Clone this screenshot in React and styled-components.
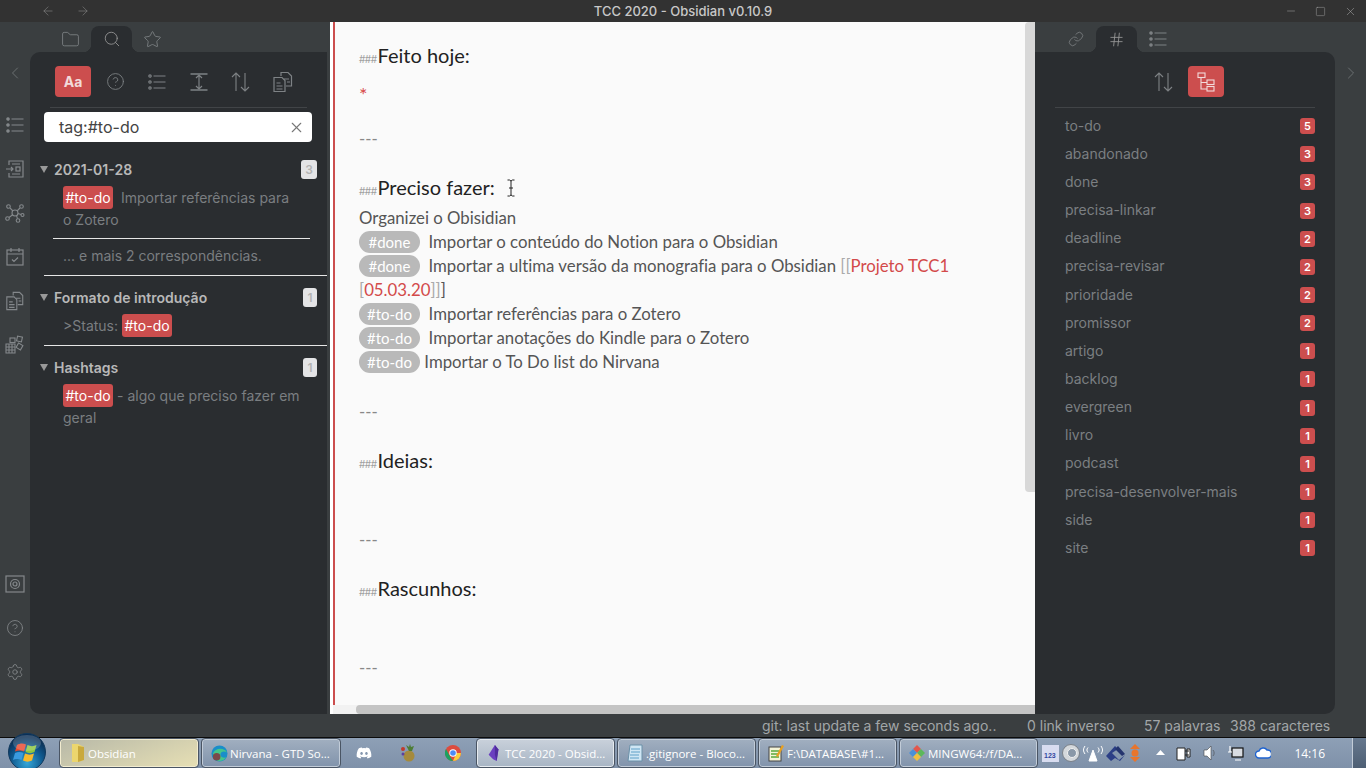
import React from 'react';
import styled, { createGlobalStyle } from 'styled-components';
import { ArrowLeft, ArrowRight, ChevronLeft, ChevronRight, CircleHelp, Folder, Hash, Link, Minus, Search, Settings, Square, Star, X } from 'lucide-react';
import { FaDiscord } from 'react-icons/fa';

const Global = createGlobalStyle`
	html, body { margin: 0; padding: 0; height: 100%; overflow: hidden; }
	body { background: #3a3e40; font-family: Inter, 'Liberation Sans', sans-serif; }
	* { box-sizing: border-box; }
`;

const Sort = () => (
	<svg width='22' height='22' viewBox='0 0 22 22' fill='none' stroke='currentColor' strokeWidth='1.1'>
		<path d='M6 20V2M2 6l4-4 4 4M15 2v18M11 16l4 4 4-4' />
	</svg>
);

const Collapse = () => (
	<svg width='20' height='20' viewBox='0 0 20 20' fill='none' stroke='currentColor' strokeWidth='1.2'>
		<path d='M1.5 2h17M1.5 18h17' strokeWidth='1.6' />
		<path d='M10 3v14M7 6l3-3 3 3M7 14l3 3 3-3' />
	</svg>
);

const Lines = ({ filled }) => (
	<svg width='18' height='18' viewBox='0 0 18 18' fill='none' stroke='currentColor' strokeWidth='1.2'>
		<circle cx='2' cy='3' r='1.2' fill={filled ? 'currentColor' : 'none'} />
		<circle cx='2' cy='9' r='1.2' fill={filled ? 'currentColor' : 'none'} />
		<circle cx='2' cy='15' r='1.2' fill={filled ? 'currentColor' : 'none'} />
		<path d='M5.500 3h12M5.500 9h12M5.500 15h12' />
	</svg>
);

const Docs = () => (
	<svg width='22' height='22' viewBox='0 0 22 22' fill='none' stroke='currentColor' strokeWidth='1.2'>
		<path d='M9 5V1.5h7l3.5 3.5v10H14' />
		<path d='M2 6.5h8l3 3v11H2z' />
		<path d='M4.5 12h4M4.5 15h6M4.5 18h6M12 8h5M15 11h3' />
	</svg>
);

const Tree = () => (
	<svg width='18' height='20' viewBox='0 0 18 20' fill='none' stroke='currentColor' strokeWidth='1.1'>
		<rect x='1' y='1' width='7' height='4.5' />
		<rect x='10' y='8' width='7' height='4.5' />
		<rect x='10' y='14.5' width='7' height='4.5' />
		<path d='M4 5.500V17h6M4 10.500h6' />
	</svg>
);

const Backlinks = () => (
	<svg width='20' height='20' viewBox='0 0 20 20' fill='none' stroke='currentColor' strokeWidth='1.2'>
		<path d='M4 6V2h14v16H4v-4' />
		<path d='M1 10h7M6 8l2 2-2 2' />
		<rect x='11' y='8' width='4' height='4' />
		<path d='M7 5h8M7 15h8' />
	</svg>
);

const Graph = () => (
	<svg width='20' height='20' viewBox='0 0 20 20' fill='none' stroke='currentColor' strokeWidth='1.1'>
		<circle cx='10' cy='10' r='3' />
		<circle cx='3.500' cy='3.500' r='1.800' />
		<circle cx='16.500' cy='3.500' r='1.800' />
		<circle cx='2.500' cy='15.500' r='1.800' />
		<circle cx='13' cy='17.500' r='1.800' />
		<circle cx='17.500' cy='12' r='1.500' />
		<path d='M5 5l3 3M15 5l-3 3M4 14.500l4-3M11.500 12.600l1 3M13 10.500l3 1' />
	</svg>
);

const Calendar = () => (
	<svg width='20' height='20' viewBox='0 0 20 20' fill='none' stroke='currentColor' strokeWidth='1.2'>
		<rect x='2' y='3' width='16' height='15' />
		<path d='M2 7h16M6 1v4M14 1v4M7 12.500l2 2 4-4' />
	</svg>
);

const Blocks = () => (
	<svg width='20' height='20' viewBox='0 0 20 20' fill='none' stroke='currentColor' strokeWidth='1.1'>
		<path d='M1 9h9v9H1zM1 12h9M1 15h9M4 9v9M7 9v9' />
		<rect x='12' y='1.500' width='5' height='5' transform='rotate(12 14.500 4)' />
		<rect x='12' y='9' width='5' height='5' transform='rotate(30 14.500 11.500)' />
		<rect x='5' y='3' width='5' height='4.500' />
	</svg>
);

const Camera = () => (
	<svg width='20' height='18' viewBox='0 0 20 18' fill='none' stroke='currentColor' strokeWidth='1.2'>
		<rect x='1' y='1' width='18' height='16' />
		<circle cx='10' cy='9' r='4.500' />
		<circle cx='10' cy='9' r='2' />
	</svg>
);

const Cursor = () => (
	<svg width='10' height='18' viewBox='0 0 10 18' fill='none' stroke='#222' strokeWidth='1'>
		<path d='M1.500 1h2L5 2l1.500-1h2M5 2v14M1.500 17h2L5 16l1.500 1h2M3 9h4' />
	</svg>
);

const Orb = () => (
	<svg width='38' height='38' viewBox='0 0 38 38'>
		<defs>
			<radialGradient id='orbFill' cx='50%' cy='80%' r='70%'>
				<stop offset='0%' stopColor='#35a6d8' />
				<stop offset='60%' stopColor='#0f5a90' />
				<stop offset='100%' stopColor='#0b2f55' />
			</radialGradient>
		</defs>
		<circle cx='19' cy='19' r='18.500' fill='url(#orbFill)' stroke='#123a5e' />
		<path d='M9 12c3-2 6-2 9-.500l-2 7c-3-1.500-6-1.500-9 0z' fill='#e8492f' />
		<path d='M19.500 12c3 1.500 6 1.500 9 0l-2 7c-3 1.500-6 1.500-9 0z' fill='#8cc63f' />
		<path d='M7 20c3-1.500 5.500-1.500 8.500 0l-2 7c-3-1.500-6-1.500-8.500 0z' fill='#3a9be0' />
		<path d='M17 20.500c3 1.500 6 1.500 9 0l-2 7c-3 1.500-6 1.500-9 0z' fill='#f8b92c' />
		<ellipse cx='19' cy='10' rx='14' ry='8' fill='#fff' opacity='0.18' />
	</svg>
);

const FolderIco = () => (
	<svg width='14' height='20' viewBox='0 0 14 20'>
		<path d='M1 1h6l6 3v13l-6 2H1z' fill='#ecd66e' />
		<path d='M7 3l6 1v13l-6 2z' fill='#c9a93c' />
	</svg>
);

const Edge = () => (
	<svg width='17' height='17' viewBox='0 0 18 18'>
		<circle cx='9' cy='9' r='8.500' fill='#1a8ec9' />
		<path d='M2 9c2-6 12-7 15-1-3-2-7-1-7 2 0 3 4 4 6 3-3 5-9 5-11 2z' fill='#45c58a' />
		<circle cx='6' cy='12.500' r='4' fill='#7a4a4a' />
	</svg>
);

const Pineapple = () => (
	<svg width='16' height='18' viewBox='0 0 16 18'>
		<ellipse cx='9' cy='12' rx='5.500' ry='5.500' fill='#a58a3c' />
		<path d='M9 7L6 1l3 2 1-3 1 3 3-1-2 5z' fill='#4d7d35' />
		<circle cx='3' cy='5' r='2' fill='#c1392b' />
		<circle cx='3' cy='10' r='1.500' fill='#5b3fa0' />
	</svg>
);

const Chrome = () => (
	<svg width='16' height='16' viewBox='0 0 16 16'>
		<circle cx='8' cy='8' r='8' fill='#dd4b3e' />
		<path d='M1 4l4 7.500 3 4.500A8 8 0 0 1 1 4z' fill='#1ca261' />
		<path d='M8 16l3.500-8H16a8 8 0 0 1-8 8z' fill='#fbcd3c' />
		<circle cx='8' cy='8' r='3.700' fill='#fff' />
		<circle cx='8' cy='8' r='2.800' fill='#4c8bf5' />
	</svg>
);

const Gem = () => (
	<svg width='12' height='16' viewBox='0 0 12 18'>
		<path d='M7 0l4 5-2 13-4-2-5-5z' fill='#6a3fc0' />
		<path d='M7 0l4 5-2 13-2-7z' fill='#4f2c9c' />
	</svg>
);

const Notepad = () => (
	<svg width='16' height='18' viewBox='0 0 16 18'>
		<path d='M3 1h12v16H1z' fill='#cfe6f4' stroke='#6a90a8' />
		<path d='M4 5h9M4 8h9M3 11h9M3 14h9' stroke='#5fa0c8' />
	</svg>
);

const NotepadPlus = () => (
	<svg width='16' height='18' viewBox='0 0 16 18'>
		<rect x='1' y='3' width='12' height='14' fill='#f4f4d8' stroke='#444' />
		<path d='M3 7h8M3 10h8M3 13h8' stroke='#5aa83c' strokeWidth='1.500' />
		<path d='M8 12l6-11 2 1-6 11z' fill='#e8a020' />
	</svg>
);

const GitIco = () => (
	<svg width='18' height='18' viewBox='0 0 18 18'>
		<path d='M9 1l4 4-4 4-4-4z' fill='#e2574c' />
		<path d='M5 5l4 4-4 4-4-4z' fill='#4a90d9' />
		<path d='M13 5l4 4-4 4-4-4z' fill='#5cb85c' />
		<path d='M9 9l4 4-4 4-4-4z' fill='#f0c040' />
	</svg>
);

const Tray = {
	Num: () => (
		<svg width='17' height='17' viewBox='0 0 17 17'>
			<rect width='17' height='17' fill='#d8dcf0' />
			<text x='2' y='13' fontSize='7' fontWeight='700' fill='#3348a0' fontFamily='Liberation Sans'>123</text>
		</svg>
	),
	Cam: () => (
		<svg width='18' height='18' viewBox='0 0 18 18'>
			<circle cx='9' cy='9' r='8.500' fill='#d4d8dc' stroke='#7a8088' />
			<circle cx='10' cy='9' r='4.500' fill='#8a98a8' stroke='#f0f0f0' />
		</svg>
	),
	Wifi: () => (
		<svg width='20' height='18' viewBox='0 0 20 18' fill='none' stroke='#fff' strokeWidth='1'>
			<path d='M2 2c-2 3-2 5 0 8M18 2c2 3 2 5 0 8M5 3.500c-1.500 2-1.500 3 0 5M15 3.500c1.500 2 1.500 3 0 5' />
			<path d='M10 6L6 17h8z' fill='#fff' />
		</svg>
	),
	Net: () => (
		<svg width='20' height='16' viewBox='0 0 20 16'>
			<path d='M0 11L9 1l3 3-6 4 7 7 6-5-5 6-5-3-4 3z' fill='#2c3f86' />
			<path d='M12 1l7 8-3 2-7-7z' fill='#24346e' />
		</svg>
	),
	Up: () => (
		<svg width='12' height='18' viewBox='0 0 12 18'>
			<path d='M6 0l5 5H1z' fill='#e8752c' />
			<circle cx='6' cy='9' r='3.500' fill='#e8752c' />
			<path d='M6 18l5-5H1z' fill='#e8752c' />
		</svg>
	),
	Caret: () => (
		<svg width='9' height='6' viewBox='0 0 9 6'><path d='M4.500 0L9 5H0z' fill='#fff' /></svg>
	),
	Plug: () => (
		<svg width='16' height='16' viewBox='0 0 16 16' fill='#fff' stroke='#222'>
			<path d='M1 3h8v12H1z' />
			<path d='M9 6h4M9 10h4M11 4h3v8h-3z' />
		</svg>
	),
	Sound: () => (
		<svg width='14' height='14' viewBox='0 0 14 14' fill='#fff' stroke='#444' strokeWidth='0.600'>
			<path d='M1 4h3l4-4v14l-4-4H1z' />
			<path d='M10 4c1.500 2 1.500 4 0 6' fill='none' />
		</svg>
	),
	Screen: () => (
		<svg width='16' height='16' viewBox='0 0 16 16' fill='none' stroke='#111' strokeWidth='1.200'>
			<rect x='4' y='3' width='11' height='9' fill='#d8dce2' />
			<path d='M2 1v6M0 7h4M7 15h6' stroke='#fff' />
		</svg>
	),
	Cloud: () => (
		<svg width='16' height='12' viewBox='0 0 16 12'>
			<path d='M4 11a3.500 3.500 0 0 1 0-7 4.500 4.500 0 0 1 8-1 4 4 0 0 1 1 8z' fill='#fff' stroke='#1f63d0' strokeWidth='1.400' />
		</svg>
	),
};

const tagsList = [
	['to-do', 5], ['abandonado', 3], ['done', 3], ['precisa-linkar', 3],
	['deadline', 2], ['precisa-revisar', 2], ['prioridade', 2], ['promissor', 2],
	['artigo', 1], ['backlog', 1], ['evergreen', 1], ['livro', 1],
	['podcast', 1], ['precisa-desenvolver-mais', 1], ['side', 1], ['site', 1],
];

const App = () => {
	return (
		<>
			<Global />
			<Window>
				<TitleBar>
					<NavArrows>
						<ArrowLeft size={14} strokeWidth={1} />
						<ArrowRight size={14} strokeWidth={1} />
					</NavArrows>
					<Title>TCC 2020 - Obsidian v0.10.9</Title>
					<WinControls>
						<Minus size={12} strokeWidth={1} />
						<Square size={11} strokeWidth={1} />
						<X size={13} strokeWidth={1} />
					</WinControls>
				</TitleBar>

				<Main>
					<Ribbon>
						<RibbonToggle><ChevronLeft size={20} strokeWidth={1} /></RibbonToggle>
						<RibbonGroup>
							<RibbonIcon><Lines filled /></RibbonIcon>
							<RibbonIcon><Backlinks /></RibbonIcon>
							<RibbonIcon><Graph /></RibbonIcon>
							<RibbonIcon><Calendar /></RibbonIcon>
							<RibbonIcon><Docs /></RibbonIcon>
							<RibbonIcon><Blocks /></RibbonIcon>
						</RibbonGroup>
						<RibbonGroup $bottom>
							<RibbonIcon><Camera /></RibbonIcon>
							<RibbonIcon><CircleHelp size={18} strokeWidth={1.100} /></RibbonIcon>
							<RibbonIcon><Settings size={18} strokeWidth={1.100} /></RibbonIcon>
						</RibbonGroup>
					</Ribbon>

					<SidePane $width={297} $gap={3}>
						<TabHeader>
							<Tab><Folder size={19} strokeWidth={1.100} /></Tab>
							<Tab $active><Search size={18} strokeWidth={1.100} /></Tab>
							<Tab><Star size={19} strokeWidth={1.100} /></Tab>
						</TabHeader>
						<Panel $side='left'>
							<Toolbar>
								<ToolButton $active><strong>Aa</strong></ToolButton>
								<ToolButton><CircleHelp size={19} strokeWidth={1.100} /></ToolButton>
								<ToolButton><Lines /></ToolButton>
								<ToolButton><Collapse /></ToolButton>
								<ToolButton><Sort /></ToolButton>
								<ToolButton><Docs /></ToolButton>
							</Toolbar>
							<SearchBox>
								<span>tag:#to-do</span>
								<X size={17} strokeWidth={1.600} color='#777' />
							</SearchBox>
							<Results>
								<Group>
									<GroupHead>
										<Triangle />
										<GroupName>2021-01-28</GroupName>
										<Count>3</Count>
									</GroupHead>
									<Match><Mark>#to-do</Mark>&nbsp; Importar referências para o Zotero</Match>
									<MatchSep />
									<Match>... e mais 2 correspondências.</Match>
								</Group>
								<Group>
									<GroupHead>
										<Triangle />
										<GroupName>Formato de introdução</GroupName>
										<Count>1</Count>
									</GroupHead>
									<Match>&gt;Status: <Mark>#to-do</Mark></Match>
								</Group>
								<Group $last>
									<GroupHead>
										<Triangle />
										<GroupName>Hashtags</GroupName>
										<Count>1</Count>
									</GroupHead>
									<Match><Mark>#to-do</Mark> - algo que preciso fazer em geral</Match>
								</Group>
							</Results>
						</Panel>
					</SidePane>

					<Editor>
						<Sheet>
							<Heading $top={0}><Hashes>###</Hashes>Feito hoje:</Heading>
							<Star2>*</Star2>
							<Rule>---</Rule>

							<Heading $top={20}><Hashes>###</Hashes>Preciso fazer:</Heading>
							<Body>
								Organizei o Obisidian<br />
								<Pill>#done</Pill>&nbsp; Importar o conteúdo do Notion para o Obsidian<br />
								<Pill>#done</Pill>&nbsp; Importar a ultima versão da monografia para o Obsidian{' '}
								<Br>[[</Br><A>Projeto TCC1</A> <Br>[</Br><A>05.03.20</A><Br>]]</Br>]<br />
								<Pill $todo>#to-do</Pill>&nbsp; Importar referências para o Zotero<br />
								<Pill $todo>#to-do</Pill>&nbsp; Importar anotações do Kindle para o Zotero<br />
								<Pill $todo>#to-do</Pill> Importar o To Do list do Nirvana
							</Body>
							<Rule>---</Rule>

							<Heading $top={20}><Hashes>###</Hashes>Ideias:</Heading>
							<Rule $tall>---</Rule>

							<Heading $top={20}><Hashes>###</Hashes>Rascunhos:</Heading>
							<Rule $tall>---</Rule>
						</Sheet>
						<MouseCursor><Cursor /></MouseCursor>
						<VThumb />
						<HTrack><HThumb /></HTrack>
					</Editor>

					<SidePane $width={300}>
						<TabHeader>
							<Tab><Link size={16} strokeWidth={1.200} /></Tab>
							<Tab $active><Hash size={17} strokeWidth={1.200} /></Tab>
							<Tab><Lines filled /></Tab>
						</TabHeader>
						<Panel $side='right'>
							<Toolbar $center>
								<ToolButton><Sort /></ToolButton>
								<ToolButton $active><Tree /></ToolButton>
							</Toolbar>
							<TagList>
								{tagsList.map(([name, n]) => (
									<TagRow key={name}>
										<span>{name}</span>
										<TagCount>{n}</TagCount>
									</TagRow>
								))}
							</TagList>
						</Panel>
					</SidePane>

					<RightRibbon><ChevronRight size={20} strokeWidth={1} /></RightRibbon>
				</Main>

				<StatusBar>
					<StatusItem $w={265}>git: last update a few seconds ago..</StatusItem>
					<StatusItem $w={117}>0 link inverso</StatusItem>
					<StatusItem $w={86}>57 palavras</StatusItem>
					<StatusItem>388 caracteres</StatusItem>
				</StatusBar>

				<Taskbar>
					<StartOrb><Orb /></StartOrb>
					<TaskGroup>
						<TaskButton $kind='open' $wide><TaskIcon><FolderIco /></TaskIcon>Obsidian</TaskButton>
						<TaskButton $wide><TaskIcon><Edge /></TaskIcon>Nirvana - GTD So...</TaskButton>
						<PinIcon><FaDiscord size={16} color='#fff' /></PinIcon>
						<PinIcon><Pineapple /></PinIcon>
						<PinIcon><Chrome /></PinIcon>
						<TaskButton $kind='active'><TaskIcon><Gem /></TaskIcon>TCC 2020 - Obsid...</TaskButton>
						<TaskButton><TaskIcon><Notepad /></TaskIcon>.gitignore - Bloco...</TaskButton>
						<TaskButton><TaskIcon><NotepadPlus /></TaskIcon>F:\DATABASE\#1...</TaskButton>
						<TaskButton><TaskIcon><GitIco /></TaskIcon>MINGW64:/f/DA...</TaskButton>
					</TaskGroup>
					<TraySet $gap={3} $ml={5}>
						<Tray.Num />
						<Tray.Cam />
						<Tray.Wifi />
						<Tray.Net />
						<Tray.Up />
					</TraySet>
					<TraySet $gap={11} $ml={15}>
						<Tray.Caret />
						<Tray.Plug />
						<Tray.Sound />
						<Tray.Screen />
						<Tray.Cloud />
					</TraySet>
					<Clock>14:16</Clock>
					<ShowDesktop />
				</Taskbar>
			</Window>
		</>
	);
};

export default App;

const Window = styled.div`
	width: 1366px;
	height: 768px;
	display: flex;
	flex-direction: column;
	overflow: hidden;
`;

const TitleBar = styled.div`
	height: 22px;
	flex: none;
	background: #323232;
	color: #b5b5b5;
	display: grid;
	grid-template-columns: 1fr auto 1fr;
	align-items: center;
`;

const NavArrows = styled.div`
	display: flex;
	gap: 21px;
	padding-left: 41px;
	color: #8a8a8a;
`;

const Title = styled.div`
	font-size: 13px;
	font-weight: 500;
	color: #c8c8c8;
`;

const WinControls = styled.div`
	display: flex;
	justify-content: flex-end;
	align-items: center;
	gap: 18px;
	padding-right: 9px;
	color: #a8a8a8;
`;

const Main = styled.div`
	height: 692px;
	flex: none;
	display: flex;
`;

const Ribbon = styled.div`
	width: 30px;
	flex: none;
	display: flex;
	flex-direction: column;
	align-items: center;
	color: #84888b;
`;

const RibbonToggle = styled.div`
	margin-top: 41px;
	height: 20px;
	color: #74787a;
`;

const RibbonGroup = styled.div`
	display: flex;
	flex-direction: column;
	gap: 24px;
	margin-top: ${(p) => (p.$bottom ? 'auto' : '32px')};
	margin-bottom: ${(p) => (p.$bottom ? '32px' : '0')};
`;

const RibbonIcon = styled.div`
	width: 20px;
	height: 20px;
	display: flex;
	align-items: center;
	justify-content: center;
`;

const RightRibbon = styled.div`
	width: 31px;
	flex: none;
	padding-top: 41px;
	display: flex;
	justify-content: center;
	color: #74787a;
`;

const SidePane = styled.div`
	width: ${(p) => p.$width}px;
	margin-right: ${(p) => p.$gap || 0}px;
	flex: none;
	display: flex;
	flex-direction: column;
`;

const TabHeader = styled.div`
	height: 30px;
	flex: none;
	display: flex;
	align-items: flex-end;
	padding-left: 20px;
`;

const Tab = styled.div`
	position: relative;
	width: 41px;
	height: 26px;
	display: flex;
	align-items: center;
	justify-content: center;
	color: ${(p) => (p.$active ? '#9a9a9a' : '#7d8184')};
	background: ${(p) => (p.$active ? '#2a2d30' : 'transparent')};
	border-radius: 8px 8px 0 0;

	${(p) =>
		p.$active &&
		`
		&::before, &::after {
			content: '';
			position: absolute;
			bottom: 0;
			width: 8px;
			height: 8px;
		}
		&::before {
			left: -8px;
			background: radial-gradient(circle at 0 0, transparent 8px, #2a2d30 8.5px);
		}
		&::after {
			right: -8px;
			background: radial-gradient(circle at 100% 0, transparent 8px, #2a2d30 8.5px);
		}
	`}
`;

const Panel = styled.div`
	flex: 1;
	min-height: 0;
	background: #2a2d30;
	border-radius: ${(p) => (p.$side === 'left' ? '10px 0 0 10px' : '0 10px 10px 0')};
	display: flex;
	flex-direction: column;
`;

const Toolbar = styled.div`
	margin: 0 20px;
	padding: 14px 5px 10px;
	border-bottom: 1px solid #414447;
	display: flex;
	gap: 6px;
	justify-content: ${(p) => (p.$center ? 'center' : 'flex-start')};
`;

const ToolButton = styled.div`
	width: 36px;
	height: 31px;
	border-radius: 4px;
	display: flex;
	align-items: center;
	justify-content: center;
	background: ${(p) => (p.$active ? '#cc4e4e' : 'transparent')};
	color: ${(p) => (p.$active ? '#f2dada' : '#7e8285')};
	font-size: 14px;
`;

const SearchBox = styled.div`
	margin: 4px 15px 0 14px;
	height: 30px;
	background: #fff;
	border-radius: 4px;
	padding: 0 7px 0 15px;
	display: flex;
	align-items: center;
	justify-content: space-between;
	font-size: 16px;
	color: #444;
`;

const Results = styled.div`
	margin: 6px 0 0 14px;
`;

const Group = styled.div`
	padding: 9px 10px 8px 0;
	border-bottom: ${(p) => (p.$last ? 'none' : '1px solid #e6e6e6')};
`;

const GroupHead = styled.div`
	height: 24px;
	margin-bottom: 6px;
	display: flex;
	align-items: center;
`;

const Triangle = styled.i`
	width: 0;
	height: 0;
	margin: 1px 6px 0 -4px;
	border-left: 4.500px solid transparent;
	border-right: 4.500px solid transparent;
	border-top: 7px solid #999;
`;

const GroupName = styled.div`
	flex: 1;
	font-size: 14px;
	font-weight: 600;
	color: #b8b8b8;
`;

const Count = styled.div`
	min-width: 14px;
	padding: 0 4px;
	height: 19px;
	line-height: 19px;
	text-align: center;
	border-radius: 3px;
	background: #e4e4e6;
	color: #b4b4b4;
	font-size: 12px;
	font-weight: 600;
`;

const Match = styled.div`
	width: 238px;
	margin-left: 19px;
	font-size: 14px;
	line-height: 22px;
	color: #7a7e81;
`;

const MatchSep = styled.div`
	height: 1px;
	width: 257px;
	margin: 7px 0 6px 9px;
	background: #e6e6e6;
`;

const Mark = styled.span`
	background: #cc4e4e;
	color: #fff;
	padding: 3px 2.500px;
	border-radius: 3px;
`;

const Editor = styled.div`
	position: relative;
	width: 705px;
	flex: none;
	background: #fafafa;
	border-left: 3px solid #fff;
	overflow: hidden;
`;

const Sheet = styled.div`
	height: 100%;
	border-left: 2px solid #cc4e4e;
	padding: 17px 0 0 24px;
	width: 665px;
	font-family: Lato, 'Noto Sans', sans-serif;
	font-variant-ligatures: none;
	font-size: 16.800px;
	line-height: 24px;
	color: #555;
`;

const Heading = styled.div`
	height: 32px;
	line-height: 32px;
	margin: ${(p) => p.$top}px 0 3px;
	font-size: 20px;
	color: #222;
`;

const Hashes = styled.span`
	font-size: 10px;
	color: #a0a0a0;
	letter-spacing: -0.500px;
	margin-right: 1px;
	font-family: Inter, sans-serif;
`;

const Star2 = styled.div`
	margin-top: 9px;
	height: 21px;
	color: #d84a4a;
	font-size: 20px;
	padding-top: 2px;
`;

const Rule = styled.div`
	margin-top: ${(p) => (p.$tall ? '52px' : '26px')};
	height: 24px;
	color: #888;
`;

const Body = styled.div`
	color: #555;
`;

const Pill = styled.span`
	background: #b9b9b9;
	color: #fff;
	padding: 2px ${(p) => (p.$todo ? '8px' : '9.500px')};
	border-radius: 11px;
	font-size: 15px;
`;

const Br = styled.span`
	color: #aaa;
`;

const A = styled.span`
	color: #d34a4a;
`;

const MouseCursor = styled.div`
	position: absolute;
	left: 173px;
	top: 157px;
`;

const VThumb = styled.div`
	position: absolute;
	right: 0;
	top: 0;
	width: 10px;
	height: 470px;
	background: #d8d8d8;
	border-radius: 4px 0 0 4px;
`;

const HTrack = styled.div`
	position: absolute;
	left: 0;
	right: 0;
	bottom: 0;
	height: 9px;
	background: #f2f2f2;
`;

const HThumb = styled.div`
	margin-left: 23px;
	height: 100%;
	background: #c4c4c4;
	border-radius: 4px 0 0 4px;
`;

const TagList = styled.div`
	padding: 3px 20px 0;
`;

const TagRow = styled.div`
	height: 28.170px;
	padding-left: 10px;
	display: flex;
	align-items: center;
	justify-content: space-between;
	font-size: 14px;
	color: #7b7f82;
`;

const TagCount = styled.span`
	min-width: 15px;
	height: 16px;
	line-height: 16px;
	margin-top: 2px;
	padding: 0 4px;
	border-radius: 3px;
	background: #cc4e4e;
	color: #fff;
	font-size: 11px;
	font-weight: 600;
	text-align: center;
`;

const StatusBar = styled.div`
	height: 23px;
	flex: none;
	display: flex;
	align-items: center;
	padding-left: 762px;
	font-size: 14px;
	color: #a2a6a8;
`;

const StatusItem = styled.span`
	width: ${(p) => (p.$w ? `${p.$w}px` : 'auto')};
	white-space: nowrap;
`;

const Taskbar = styled.div`
	position: relative;
	flex: 1;
	border-top: 1px solid #0c0c0c;
	background: linear-gradient(#8ea0b6, #7f91a9);
	display: flex;
	align-items: center;
`;

const StartOrb = styled.div`
	position: absolute;
	left: 8px;
	top: -5px;
`;

const TaskGroup = styled.div`
	margin-left: 60px;
	display: flex;
	align-items: center;
	gap: 4px;
`;

const TaskButton = styled.div`
	width: ${(p) => (p.$wide ? '138px' : '137px')};
	height: 28px;
	padding-left: 7px;
	display: flex;
	align-items: center;
	gap: 1px;
	border-radius: 3px;
	border: 1px solid ${(p) => (p.$kind === 'open' ? '#f2ecd0' : p.$kind === 'active' ? '#e6ebf0' : '#c2ccd8')};
	outline: 1px solid #4a5564;
	background: ${(p) =>
		p.$kind === 'open'
			? 'linear-gradient(160deg, #b8b9a8, #e6dfb4)'
			: p.$kind === 'active'
				? 'linear-gradient(#c8d0da, #a9b6c5)'
				: 'linear-gradient(#a0aebf, #8294ac)'};
	color: #fff;
	font-family: 'Open Sans', sans-serif;
	font-size: 11.500px;
	white-space: nowrap;
	overflow: hidden;
`;

const TaskIcon = styled.span`
	width: 19px;
	flex: none;
	display: flex;
	justify-content: center;
`;

const PinIcon = styled.div`
	width: 40.330px;
	display: flex;
	justify-content: center;
`;

const TraySet = styled.div`
	margin-left: ${(p) => p.$ml}px;
	display: flex;
	align-items: center;
	gap: ${(p) => p.$gap}px;
`;

const Clock = styled.div`
	position: absolute;
	right: 41px;
	top: 7px;
	font-family: 'Open Sans', sans-serif;
	font-size: 12px;
	color: #fff;
`;

const ShowDesktop = styled.div`
	position: absolute;
	right: 0;
	top: 0;
	bottom: 0;
	width: 14px;
	border-left: 1px solid #c2ccd8;
	background: linear-gradient(#66788e, #4e5f74);
`;
